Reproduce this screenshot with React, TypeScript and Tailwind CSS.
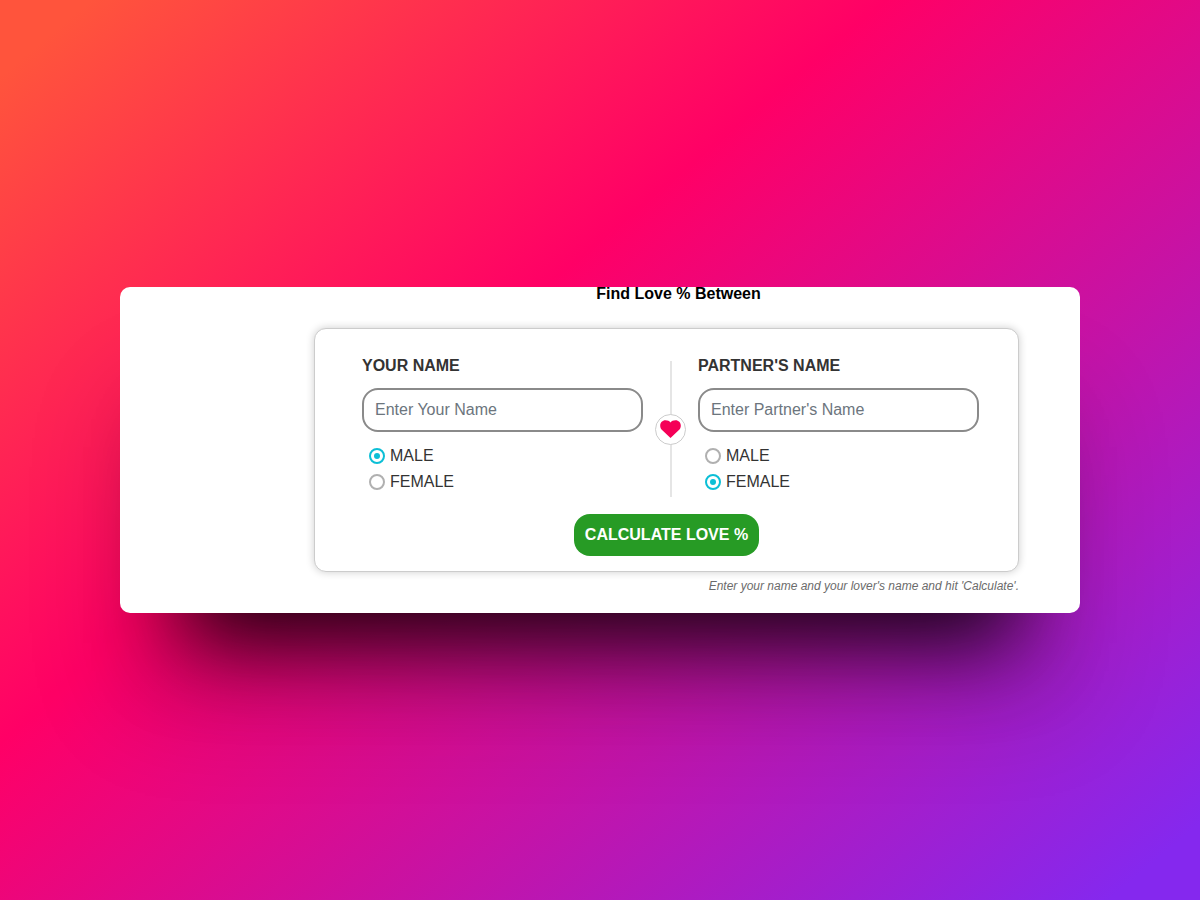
import { useState } from "react";

const GENDERS = ["Male", "Female"];

type PersonProps = {
  id: string;
  label: string;
  placeholder: string;
  defaultGender: string;
};

const Person = ({ id, label, placeholder, defaultGender }: PersonProps) => {
  const [gender, setGender] = useState(defaultGender);

  return (
    <div className="min-w-0 flex-1">
      <label
        htmlFor={id}
        className="mb-3 block text-base leading-5 font-bold text-[#333] uppercase"
      >
        {label}
      </label>
      <input
        id={id}
        type="text"
        placeholder={placeholder}
        className="block h-11 w-full rounded-2xl border-2 border-[#8a8a8a] bg-white px-[11px] text-base text-[#333] outline-none placeholder:text-[#6c757d]"
      />
      <div className="mt-[11px] pl-[7px]">
        {GENDERS.map((item) => (
          <label
            key={item}
            className="flex h-[26px] items-center gap-[5px] text-base text-[#333] uppercase"
          >
            <input
              type="radio"
              name={`${id}-gender`}
              checked={gender === item}
              onChange={() => setGender(item)}
              className="flex size-4 shrink-0 appearance-none items-center justify-center rounded-full border-2 border-[#b0b0b0] bg-white before:size-[6px] before:rounded-full checked:border-[#0cbfd6] checked:before:bg-[#0cbfd6]"
            />
            {item}
          </label>
        ))}
      </div>
    </div>
  );
};

const App = () => {
  return (
    <main className="flex min-h-screen items-center justify-center bg-[linear-gradient(140deg,#ff543c_4%,#ff0066_39%,#8528ee_96%)] font-['Liberation_Sans',Arial,sans-serif]">
      <div className="w-4/5 rounded-[10px] bg-white pr-[61px] pb-[17px] pl-[194px] shadow-[0_100px_100px_-10px_rgba(0,0,0,0.15),0_95px_85px_-65px_rgba(0,0,0,0.85)]">
        <h1 className="pl-6 text-center text-base leading-[14px] font-bold text-black">
          Find Love % Between
        </h1>

        <form
          onSubmit={(e) => e.preventDefault()}
          className="mt-[27px] rounded-xl border border-[#ccc] bg-white pt-[27px] pb-[15px] shadow-[0_0_8px_rgba(0,0,0,0.2)]"
        >
          <div className="flex pr-[39px] pl-[47px]">
            <Person
              id="your-name"
              label="Your Name"
              placeholder="Enter Your Name"
              defaultGender="Male"
            />
            {/* divider */}
            <div className="relative mx-3 mt-[5px] flex h-[136px] w-[31px] shrink-0 items-center justify-center">
              <span className="h-full w-[2px] bg-[#e5e5e5]" />
              <span className="absolute flex size-[31px] items-center justify-center rounded-full border border-[#ccc] bg-white">
                <svg viewBox="0 0 22 19" className="w-[21px] fill-[#f50057]">
                  <path d="M11 18.8 1.6 10C.7 9 .2 7.8.2 5.8.2 2.7 2.6.3 5.7.3 8 .3 10 1.2 11 2.6 12 1.2 14 .3 16.3.3c3.1 0 5.5 2.4 5.5 5.5 0 2-.5 3.2-1.4 4.2z" />
                </svg>
              </span>
            </div>
            <Person
              id="partner-name"
              label="Partner's Name"
              placeholder="Enter Partner's Name"
              defaultGender="Female"
            />
          </div>
          <button
            type="submit"
            className="mx-auto mt-[17px] block h-[42px] rounded-2xl bg-[#279b25] px-[11px] text-base font-bold text-white uppercase"
          >
            Calculate Love %
          </button>
        </form>
        <p className="mt-1 text-right text-xs leading-5 text-[#6b6b6b] italic">
          Enter your name and your lover's name and hit 'Calculate'.
        </p>
      </div>
    </main>
  );
};

export default App;
